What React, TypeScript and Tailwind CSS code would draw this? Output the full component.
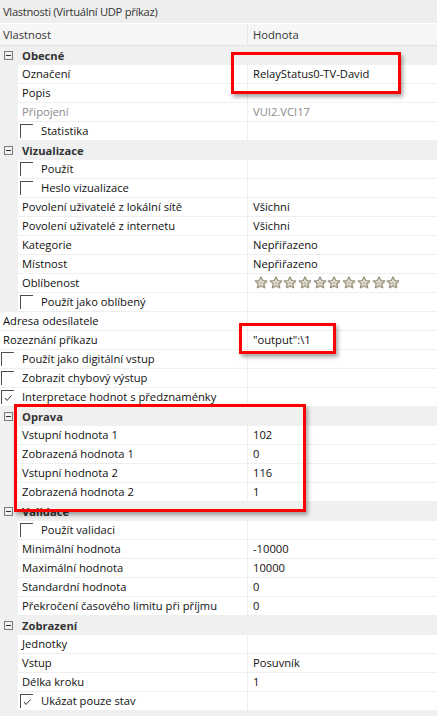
import React from "react";

type R = {
  t: "group" | "child" | "top";
  label: string;
  value?: string;
  cb?: boolean;
  muted?: boolean;
  stars?: boolean;
};

const rows: R[] = [
  { t: "group", label: "Obecné" },
  { t: "child", label: "Označení", value: "RelayStatus0-TV-David" },
  { t: "child", label: "Popis" },
  { t: "child", label: "Připojení", value: "VUI2.VCI17", muted: true },
  { t: "child", label: "Statistika", cb: false },
  { t: "group", label: "Vizualizace" },
  { t: "child", label: "Použít", cb: false },
  { t: "child", label: "Heslo vizualizace", cb: false },
  { t: "child", label: "Povolení uživatelé z lokální sítě", value: "Všichni" },
  { t: "child", label: "Povolení uživatelé z internetu", value: "Všichni" },
  { t: "child", label: "Kategorie", value: "Nepřiřazeno" },
  { t: "child", label: "Místnost", value: "Nepřiřazeno" },
  { t: "child", label: "Oblíbenost", stars: true },
  { t: "child", label: "Použít jako oblíbený", cb: false },
  { t: "top", label: "Adresa odesílatele" },
  { t: "top", label: "Rozeznání příkazu", value: '"output":\\1' },
  { t: "top", label: "Použít jako digitální vstup", cb: false },
  { t: "top", label: "Zobrazit chybový výstup", cb: false },
  { t: "top", label: "Interpretace hodnot s předznaménky", cb: true },
  { t: "group", label: "Oprava" },
  { t: "child", label: "Vstupní hodnota 1", value: "102" },
  { t: "child", label: "Zobrazená hodnota 1", value: "0" },
  { t: "child", label: "Vstupní hodnota 2", value: "116" },
  { t: "child", label: "Zobrazená hodnota 2", value: "1" },
  { t: "group", label: "Validace" },
  { t: "child", label: "Použít validaci", cb: false },
  { t: "child", label: "Minimální hodnota", value: "-10000" },
  { t: "child", label: "Maximální hodnota", value: "10000" },
  { t: "child", label: "Standardní hodnota", value: "0" },
  { t: "child", label: "Překročení časového limitu při příjmu", value: "0" },
  { t: "group", label: "Zobrazení" },
  { t: "child", label: "Jednotky" },
  { t: "child", label: "Vstup", value: "Posuvník" },
  { t: "child", label: "Délka kroku", value: "1" },
  { t: "child", label: "Ukázat pouze stav", cb: true },
  { t: "group", label: "Styl" },
];

function Checkbox({ checked }: { checked: boolean }) {
  return (
    <div className="w-[13px] h-[14px] border-t border-l border-[#4d4d4d] shrink-0 relative">
      {checked && (
        <svg width="12" height="13" viewBox="0 0 12 13" className="absolute left-0 top-0">
          <polyline points="3,7 5,9.5 9.5,4.5" fill="none" stroke="#333" strokeWidth="1" />
        </svg>
      )}
    </div>
  );
}

function Star() {
  return (
    <svg width="14" height="14" viewBox="0 0 14 14" className="shrink-0">
      <polygon
        points="7.6,1.6 9.4,5.2 13.3,5.6 10.3,8.3 11.2,12.3 7.6,10.3 4,12.3 4.9,8.3 1.9,5.6 5.8,5.2"
        fill="#d6d1c2"
        opacity="0.6"
        transform="translate(0.6,0.7)"
      />
      <polygon
        points="7,1 8.8,4.6 12.7,5 9.7,7.7 10.6,11.7 7,9.7 3.4,11.7 4.3,7.7 1.3,5 5.2,4.6"
        fill="#f4f2ec"
        stroke="#9a927e"
        strokeWidth="1.3"
        strokeLinejoin="round"
      />
      <polygon
        points="7,4.3 7.9,6.1 9.9,6.3 8.4,7.6 8.8,9.5 7,8.5 5.2,9.5 5.6,7.6 4.1,6.3 6.1,6.1"
        fill="#ccc5b2"
      />
    </svg>
  );
}

function Expand() {
  return (
    <div className="ml-[4px] w-[9px] h-[9px] border border-[#7a7a7a] flex items-center justify-center shrink-0">
      <div className="w-[5px] h-px bg-[#333]" />
    </div>
  );
}

function Value({ r }: { r: R }) {
  if (r.stars) {
    return (
      <div className="flex items-center gap-[0.7px] ml-[1px]">
        {Array.from({ length: 10 }).map((_, i) => (
          <Star key={i} />
        ))}
      </div>
    );
  }
  return (
    <span className={r.muted ? "text-[#8a8a8a]" : "text-[#111]"}>{r.value ?? ""}</span>
  );
}

function Row({ r }: { r: R }) {
  if (r.t === "group") {
    return (
      <div className="flex items-center h-[19px] bg-[#f0f0f0] shrink-0">
        <div className="w-[18px] flex items-center">
          <Expand />
        </div>
        <span className="pl-[4px] font-bold text-[#333]">{r.label}</span>
      </div>
    );
  }
  if (r.t === "child") {
    return (
      <div className="flex h-[19px] shrink-0">
        <div className="w-[18px] bg-[#f0f0f0] shrink-0" />
        <div className="flex flex-1 bg-white border-b border-[#efefef]">
          <div className="w-[230px] border-r border-[#efefef] flex items-center pl-[2px] shrink-0 overflow-hidden whitespace-nowrap">
            {r.cb !== undefined ? (
              <>
                <Checkbox checked={r.cb} />
                <span className="ml-[8px] text-[#111]">{r.label}</span>
              </>
            ) : (
              <span className={"ml-[2px] " + (r.muted ? "text-[#8a8a8a]" : "text-[#111]")}>{r.label}</span>
            )}
          </div>
          <div className="flex-1 flex items-center pl-[5px] whitespace-nowrap">
            <Value r={r} />
          </div>
        </div>
      </div>
    );
  }
  return (
    <div className="flex h-[19px] shrink-0 bg-white border-b border-[#efefef]">
      <div className="w-[248px] border-r border-[#efefef] flex items-center shrink-0 overflow-hidden whitespace-nowrap">
        {r.cb !== undefined ? (
          <>
            <div className="ml-[1px]">
              <Checkbox checked={r.cb} />
            </div>
            <span className="ml-[8px] text-[#111]">{r.label}</span>
          </>
        ) : (
          <span className="ml-[3px] text-[#111]">{r.label}</span>
        )}
      </div>
      <div className="flex-1 flex items-center pl-[5px] whitespace-nowrap">
        <Value r={r} />
      </div>
    </div>
  );
}

function RedBox({ cls }: { cls: string }) {
  return (
    <div
      className={
        "absolute border-[3px] border-[#ff0000] shadow-[2px_3px_4px_rgba(0,0,0,0.35)] pointer-events-none " + cls
      }
    />
  );
}

export default function App() {
  return (
    <div
      className="relative w-[437px] h-[716px] overflow-hidden bg-white text-[11.2px] leading-none flex flex-col"
      style={{ fontFamily: '"Open Sans", "Noto Sans", sans-serif' }}
    >
      <div className="h-[23px] bg-[#eeeeee] flex items-center pl-[3px] text-[#333] tracking-[-0.3px] shrink-0">
        Vlastnosti (Virtuální UDP příkaz)
      </div>
      <div className="h-[23px] bg-[#f6f6f6] flex border-b border-[#e3e3e3] border-t border-t-white shrink-0">
        <div className="w-[248px] border-r border-[#e8e8e8] flex items-center pl-[3px] text-[#333]">Vlastnost</div>
        <div className="flex-1 flex items-center pl-[5px] text-[#333]">Hodnota</div>
      </div>
      {rows.map((r, i) => (
        <Row key={i} r={r} />
      ))}
      <RedBox cls="left-[231px] top-[52px] w-[170px] h-[42px]" />
      <RedBox cls="left-[239px] top-[323px] w-[97px] h-[31px]" />
      <RedBox cls="left-[14px] top-[404px] w-[292px] h-[108px]" />
    </div>
  );
}
